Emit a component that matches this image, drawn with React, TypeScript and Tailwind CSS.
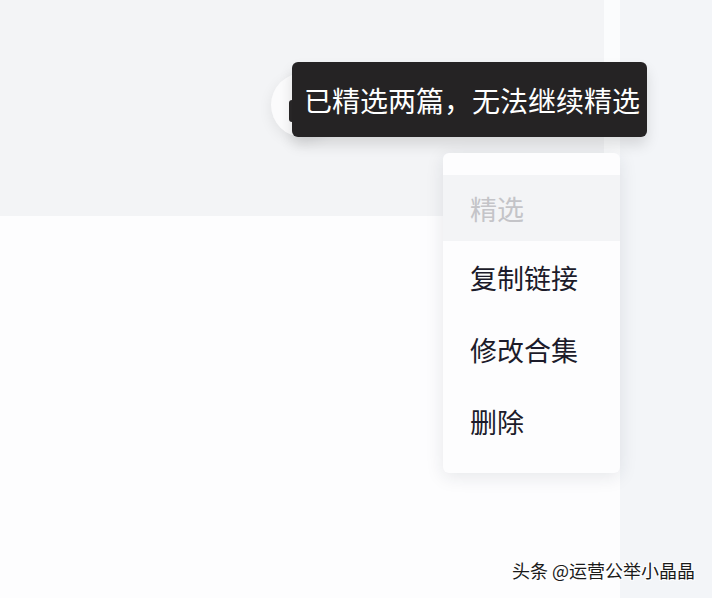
import React from "react";

const font = { fontFamily: '"Noto Sans CJK SC", "Noto Sans", sans-serif' };

export default function App() {
  return (
    <div className="relative w-[712px] h-[598px] overflow-hidden bg-[#f4f6f9]" style={font}>
      <div className="flex h-full">
        <div className="flex flex-col w-[620px]">
          <div className="flex h-[216px]">
            <div className="flex-1 bg-[#f3f4f6]" />
            <div className="w-[16px] bg-[#fbfcfd]" />
          </div>
          <div className="flex-1 bg-[#fdfdfe]" />
        </div>
        <div className="flex-1 bg-[#f3f5f8]" />
      </div>

      {/* circle behind tooltip */}
      <div className="absolute left-[271px] top-[73px] w-[64px] h-[64px] rounded-full bg-[#fbfbfc] shadow-[0_4px_14px_rgba(0,0,0,0.08)]" />
      <div className="absolute left-[289px] top-[100px] w-[6px] h-[22px] rounded-sm bg-[#2a2829]" />

      {/* tooltip */}
      <div className="absolute left-[292px] top-[62px] w-[355px] h-[75px] rounded-[6px] bg-[#252324] shadow-[0_8px_14px_rgba(0,0,0,0.12)] flex items-center pl-[12px]">
        <span className="text-white text-[28px] leading-none tracking-[0px] whitespace-nowrap">
          已精选两篇，无法继续精选
        </span>
      </div>

      {/* menu */}
      <div className="absolute left-[443px] top-[153px] w-[177px] h-[320px] rounded-[6px] bg-[#fdfdfe] shadow-[0_4px_18px_rgba(30,40,60,0.10)] pt-[22px] flex flex-col">
        <div className="h-[66px] bg-[#f3f4f6] flex items-center pl-[27px] text-[27px] leading-none text-[#c4c4c8]">
          精选
        </div>
        <div className="h-[72px] flex items-center pl-[27px] text-[27px] leading-none text-[#1c1b2a]">
          复制链接
        </div>
        <div className="h-[72px] flex items-center pl-[27px] text-[27px] leading-none text-[#1c1b2a]">
          修改合集
        </div>
        <div className="h-[72px] flex items-center pl-[27px] text-[27px] leading-none text-[#1c1b2a]">
          删除
        </div>
      </div>

      {/* watermark */}
      <div
        className="absolute left-[512px] top-[561px] text-[18px] leading-none text-[#1a1a1a] whitespace-nowrap"
        style={{ textShadow: "1px 1px 0 #fff, -1px -1px 0 #fff, 1px -1px 0 #fff, -1px 1px 0 #fff" }}
      >
        头条 @运营公举小晶晶
      </div>
    </div>
  );
}
